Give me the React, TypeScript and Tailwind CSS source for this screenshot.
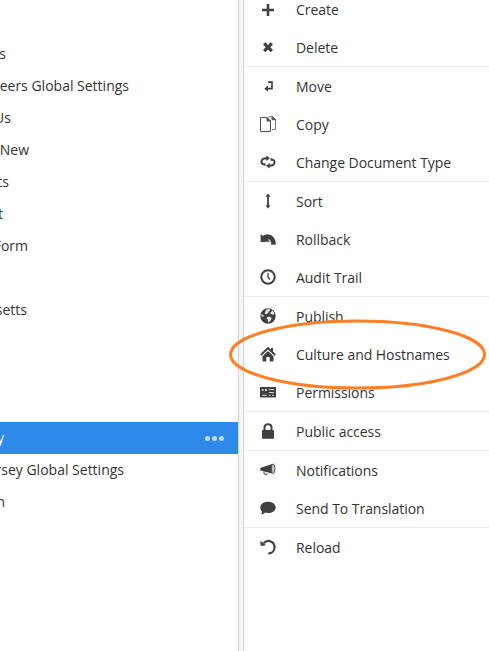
import type { ReactNode } from "react";

type TreeNode = { label: string; width: string; selected?: boolean };

const nodes: TreeNode[] = [
  { label: "s", width: "w-[6px]" },
  { label: "eers Global Settings", width: "w-[129px]" },
  { label: "Us", width: "w-[11px]" },
  { label: "New", width: "w-[29px]" },
  { label: "ts", width: "w-[9px]" },
  { label: "t", width: "w-[3px]" },
  { label: "Form", width: "w-[28px]" },
  { label: "", width: "w-0" },
  { label: "setts", width: "w-[27px]" },
  { label: "", width: "w-0" },
  { label: "", width: "w-0" },
  { label: "", width: "w-0" },
  { label: "y", width: "w-[4px]", selected: true },
  { label: "rsey Global Settings", width: "w-[124px]" },
  { label: "n", width: "w-[5px]" },
];

const icons: Record<string, ReactNode> = {
  create: <path d="M6.700 3h2.600v4.700H14v2.600H9.300V15H6.700v-4.700H2V7.700h4.700z" />,
  remove: <path d="M3 5.300 5.300 3.300 8 6l2.700-2.700L13 5.300 10.300 8.300l2.700 2.700-2.300 2.200L8 10.500l-2.700 2.700L3 11l2.700-2.700z" />,
  move: (
    <g>
      <path d="M8 4.200h4v6.500H7.500" fill="none" stroke="#404040" strokeWidth="1.700" />
      <path d="M8 7.500v6.300L4.300 10.700z" />
    </g>
  ),
  copy: (
    <g fill="none" stroke="#505050" strokeWidth="1">
      <path d="M.5 1.500h6.500l3.500 3.500v10.500H.5z" />
      <path d="M8.500.7H13l2.500 3v9.800H12" stroke="#777" />
      <path d="M7 1.500v3.500h3.500zM12 .700v3h3.500z" fill="#555" />
    </g>
  ),
  change: (
    <g>
      <path d="M3.500 10.600C-.3 8.500 1.500 4.500 6 4.300h2M12.500 5.400c3.800 2.100 2 6.100-2.500 6.300H8" fill="none" stroke="#404040" strokeWidth="1.900" />
      <path d="M6.300 1.600v5.400L10 4.300zM9.700 9v5.400L6 11.700zM2.200 9.200h3.300v2.500H4zM13.800 6.800h-3.300V4.300H12z" />
    </g>
  ),
  sort: <path d="M8 .5 10.500 3.800H8.900v8.400h1.600L8 15.500l-2.500-3.300h1.600V3.800H5.500z" />,
  rollback: <path d="M.8 3.500 3 5C6.500 1.700 15.500 3 15.800 13.500h-4.500c0-3.800-1.300-5.500-3.800-5.200l2.400 2.300-9.100.5zM7 6l4 1.300" stroke="#404040" strokeWidth=".3" />,
  audit: (
    <g fill="none" stroke="#404040">
      <circle cx="8" cy="8" r="6.700" strokeWidth="2" />
      <path d="M8 4V8.300l2 2.200" strokeWidth="1.300" />
    </g>
  ),
  publish: (
    <g>
      <circle cx="8" cy="8" r="7.700" />
      <path d="M6.300 1.500 9.500 1l.7 1.500-1.700 1-.2 1.500L6 6.300l-1.300-.6.600-2.200zM10 5l2.500-2.500 2 3-1.200 1.300-1.800-.6zM8.500 8.500l3 1-.5 2.500-2 2.200-1-.5-.3-2.200-1.200-1.700zM1.500 6l2.300 1.600-.4 1.200-2-.6z" fill="#e9e9e9" />
    </g>
  ),
  home: <path d="M8 .7 11 3.600V2h2v3.600l2.800 2.700-1.200 1.400L8 3.500 1.400 9.700.2 8.300zM8 5l5.500 5.200v5.300H9.700V11H6.300v4.500H2.500v-5.300z" />,
  permissions: (
    <g>
      <path d="M0 3h16v10.500H0z" />
      <path d="M2 5h1.500v2H2zM5 5h2v2H5zM9 5h5v1H9zM9 8h5v1H9zM2 10.800h5v.9H2zM9 10.800h1.500v.9H9zM12 10.800h2v.9h-2z" fill="#d2d2d2" />
    </g>
  ),
  lock: (
    <g>
      <rect x="2" y="7" width="12" height="8.700" rx=".7" />
      <path d="M4.500 8V4.500C4.500 2.500 6 1.200 8 1.200s3.500 1.300 3.500 3.300V8" fill="none" stroke="#404040" strokeWidth="2" />
    </g>
  ),
  notify: (
    <g>
      <path d="M.3 6 12 2v9.500L.3 8.500z" />
      <ellipse cx="13.200" cy="6.800" rx="1.700" ry="4.900" fill="#ccc" stroke="#505050" strokeWidth="1" />
      <path d="M4 9.500v2l2 1.300 1.300-1.500" fill="none" stroke="#666" strokeWidth="1.200" />
    </g>
  ),
  translate: <path d="M8 1.700c4.500 0 7.700 2.400 7.700 5.700S12.500 13 8 13c-1 0-2-.1-2.900-.4C4.200 13.700 2.700 14.500.9 14.700c.8-.9 1.200-2 1.100-3.300C.8 10.300.3 8.900.3 7.400.3 4.100 3.500 1.700 8 1.700z" />,
  reload: (
    <g>
      <path d="M3.500 4.200C8-.2 14.500 2.500 14.500 8.200c0 3.800-2.800 6.300-6.300 6.300" fill="none" stroke="#404040" strokeWidth="2.200" />
      <path d="M.2 1.700.8 7l5.200-.8z" />
    </g>
  ),
};

const groups = [
  [["create", "Create"], ["remove", "Delete"]],
  [["move", "Move"], ["copy", "Copy"], ["change", "Change Document Type"]],
  [["sort", "Sort"], ["rollback", "Rollback"], ["audit", "Audit Trail"]],
  [["publish", "Publish"], ["home", "Culture and Hostnames"], ["permissions", "Permissions"]],
  [["lock", "Public access"]],
  [["notify", "Notifications"], ["translate", "Send To Translation"]],
  [["reload", "Reload"]],
];

function Tree() {
  return (
    <nav className="w-[238px] shrink-0 pt-[38px]">
      {nodes.map((node, i) => (
        <div
          key={i}
          className={
            node.selected
              ? "flex h-8 items-center justify-between bg-[#2e8aea] pr-[14px] text-white"
              : "flex h-8 items-center"
          }
        >
          <span className={`flex justify-end whitespace-nowrap ${node.width}`}>
            <span className="shrink-0">{node.label}</span>
          </span>
          {node.selected && (
            <span className="flex gap-[2px]">
              <i className="size-[5px] rounded-full bg-[#c0dcf9]" />
              <i className="size-[5px] rounded-full bg-[#c0dcf9]" />
              <i className="size-[5px] rounded-full bg-[#c0dcf9]" />
            </span>
          )}
        </div>
      ))}
    </nav>
  );
}

export default function App() {
  return (
    <div className="relative flex h-[651px] w-[489px] overflow-hidden bg-white font-['Open_Sans',sans-serif] text-[14px] leading-5 text-[#333]">
      <Tree />
      <div className="w-[6px] shrink-0 border-x border-[#d2d2d2] bg-[#f6f6f6]" />
      <div className="-mt-[10px] flex-1 divide-y divide-[#ececec]">
        {groups.map((group, i) => (
          <ul key={i}>
            {group.map(([icon, label]) => (
              <li key={icon} className="flex h-[38px] items-center gap-5 pl-4">
                <svg viewBox="0 0 16 16" className="size-4 shrink-0" fill="#404040">
                  {icons[icon]}
                </svg>
                <span className="whitespace-nowrap pt-0.5 tracking-[-0.04px]">{label}</span>
              </li>
            ))}
          </ul>
        ))}
      </div>
      <svg className="pointer-events-none absolute left-[228px] top-[318px] h-[73px] w-[260px]" viewBox="0 0 260 73" fill="none">
        <ellipse cx="129.500" cy="36.500" rx="127" ry="33.500" stroke="#ff7f27" strokeWidth="3" />
      </svg>
    </div>
  );
}
